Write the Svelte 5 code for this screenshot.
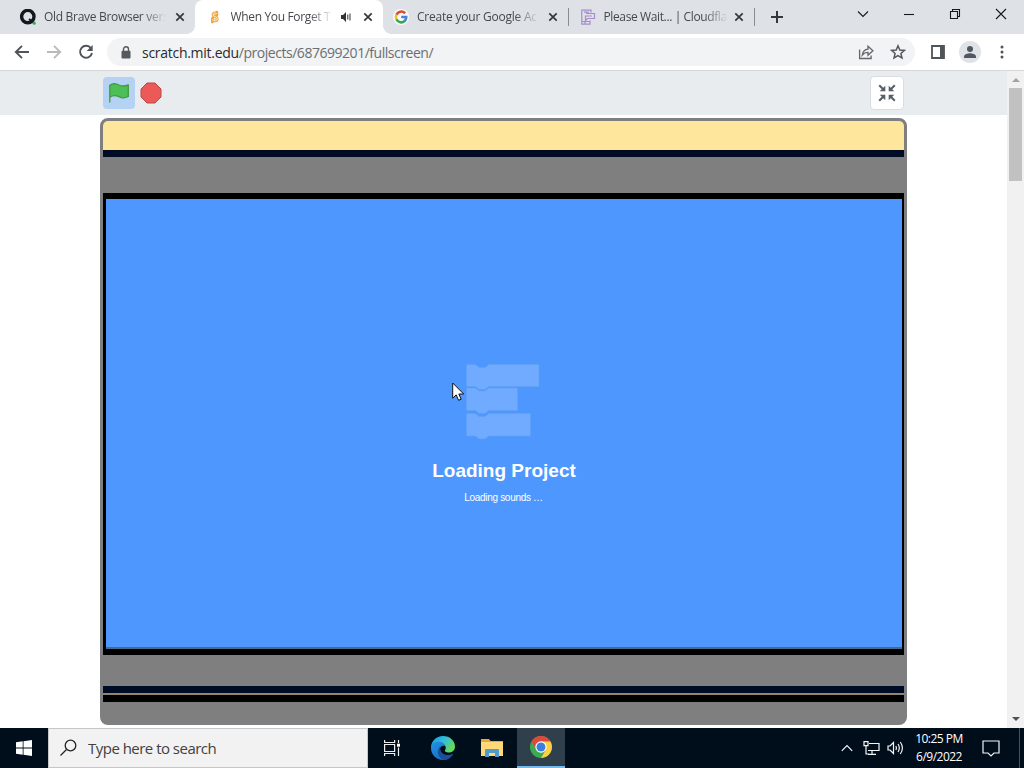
<script>
    const tabs = [
        { title: "Old Brave Browser vers", icon: "brave", width: 122, spacing: -0.3 },
        { title: "When You Forget T", icon: "scratch", width: 102, active: true, audio: true, spacing: -0.34 },
        { title: "Create your Google Ac", icon: "google", width: 122, separator: true, spacing: -0.22 },
        { title: "Please Wait... | Cloudfla", icon: "cloud", width: 124, separator: true, spacing: -0.38 },
    ];

    let search = "";
</script>

<div class="screen">
    <div class="tab-strip">
        {#each tabs as tab}
            <div class="tab" class:active={tab.active} class:separator={tab.separator}>
                <svg class="favicon" width="16" height="16" viewBox="0 0 16 16">
                    {#if tab.icon === "brave"}
                        <circle cx="7.8" cy="7.6" r="6.2" fill="none" stroke="#111820" stroke-width="3.4" />
                        <path d="M9 10l5 4" stroke="#111820" stroke-width="2" />
                        <circle cx="14.2" cy="14.2" r="1.6" fill="#39ad48" />
                    {:else if tab.icon === "scratch"}
                        <path d="M9.8 4.6C7.8 3.2 5.6 4.2 6 6.2C6.4 8 10.2 7.3 10.3 9.8C10.4 12 7 12.6 5.4 11.1M9.8 3.2v3M5.4 9.3v3.7" fill="none" stroke="#f3a43b" stroke-width="2.8" stroke-linecap="round" />
                        <path d="M9.8 4.5C7.8 3.3 5.7 4.4 6 6.1C6.4 7.8 10.4 7.5 10.3 10C10.2 12 7 12.3 5.3 10.8" fill="none" stroke="#fff0c8" stroke-width="1" />
                    {:else if tab.icon === "google"}
                        <circle cx="8" cy="8" r="8" fill="#fafafa" />
                        <g fill="none" stroke-width="2.5">
                            <path d="M12.1 4.4A5.2 5.2 0 0 0 3.4 5.8" stroke="#df4930" />
                            <path d="M3.4 5.6A5.2 5.2 0 0 0 3.6 10.7" stroke="#f5bd20" />
                            <path d="M3.5 10.4A5.2 5.2 0 0 0 11.7 12" stroke="#36a853" />
                            <path d="M8.2 8h5.1A5.2 5.2 0 0 1 11.4 12.2" stroke="#4285d4" />
                        </g>
                    {:else}
                        <g fill="none" stroke="#a78ccd" stroke-width="1.2">
                            <path d="M11 3.5V1.2H1.8v14H10V11.5M1.8 12.5H10M5 12.5v2.5M4 3.2h5" />
                            <path d="M6 4.5h8.5v5H7.5l-2 2V7H12" />
                        </g>
                    {/if}
                </svg>
                <span class="title" style="width: {tab.width}px; letter-spacing: {tab.spacing}px">{tab.title}</span>
                {#if tab.audio}
                    <svg class="audio" width="12" height="12" viewBox="0 0 12 12">
                        <path d="M1 4h2l3-3v10L3 8H1z" fill="#333" />
                        <path d="M7.8 3.5v5M10 2.5v7" stroke="#444" stroke-width="1.1" />
                    </svg>
                {/if}
                <svg class="close" width="10" height="10" viewBox="0 0 10 10">
                    <path d="M1.3 1.3l7.4 7.4M8.7 1.3L1.3 8.7" stroke="#34373b" stroke-width="1.7" />
                </svg>
            </div>
        {/each}
        <svg class="new-tab" width="14" height="14" viewBox="0 0 14 14">
            <path d="M7 1v12M1 7h12" stroke="#34373b" stroke-width="2" />
        </svg>
        <div class="window-buttons">
            <svg width="46" height="28" viewBox="0 0 46 28"><path d="M18 11.5l5 5 5-5" /></svg>
            <svg width="46" height="28" viewBox="0 0 46 28"><path d="M18 14.5h10" /></svg>
            <svg width="46" height="28" viewBox="0 0 46 28"><path d="M18.5 11.5h7v7h-7zM20.5 11.5v-2h7v7h-2" /></svg>
            <svg width="46" height="28" viewBox="0 0 46 28"><path d="M18 9l10 10M28 9L18 19" /></svg>
        </div>
    </div>

    <div class="toolbar">
        <div class="nav">
            <svg width="16" height="16" viewBox="0 0 16 16"><path d="M15 8H2M8 1.8L1.8 8 8 14.2" stroke="#505357" /></svg>
            <svg width="16" height="16" viewBox="0 0 16 16"><path d="M1 8h13M8 1.8L14.2 8 8 14.2" stroke="#b8babc" /></svg>
            <svg width="16" height="16" viewBox="0 0 16 16">
                <path d="M13 4.2A6 6 0 1 0 14 9" stroke="#505357" />
                <path class="solid" d="M14.7 1v6H8.7z" />
            </svg>
        </div>
        <div class="address">
            <svg width="10" height="13" viewBox="0 0 10 13">
                <path d="M2.5 6V3.3a2.5 2.5 0 0 1 5 0V6" fill="none" stroke="#55585c" stroke-width="1.4" />
                <rect x="0.5" y="4.7" width="9" height="7.8" rx="1" fill="#55585c" />
            </svg>
            <span class="url"><b>scratch.mit.edu</b>/projects/687699201/fullscreen/</span>
            <svg width="16" height="16" viewBox="0 0 16 16" fill="none" stroke="#63666a" stroke-width="1.3">
                <path d="M1.6 5.5v9h11.5v-3" />
                <path d="M4.3 11C5 7 7 5.3 10 5.1V2.2l4.9 4.6-4.9 4.4V8.4C7.5 8.3 5.8 9.2 4.3 11z" />
            </svg>
            <svg width="16" height="16" viewBox="0 0 16 16" fill="none" stroke="#55585c" stroke-width="1.5">
                <path d="M8 1.8l1.8 4.2 4.6.4-3.5 3 1.1 4.5L8 11.5l-4 2.4 1.1-4.5-3.5-3L6.2 6z" />
            </svg>
        </div>
        <svg class="panel" width="14" height="14" viewBox="0 0 14 14">
            <path d="M1 1h12v12H1z" fill="#fff" stroke="#505357" stroke-width="1.8" />
            <path d="M9 1h4v12H9z" fill="#505357" />
        </svg>
        <svg class="avatar" width="22" height="22" viewBox="0 0 22 22">
            <circle cx="11" cy="11" r="11" fill="#dfe2e7" />
            <circle cx="11" cy="8" r="3" fill="#505761" />
            <path d="M5 17v-1.5c0-2 4-3.2 6-3.2s6 1.2 6 3.2V17z" fill="#505761" />
        </svg>
        <svg class="more" width="4" height="16" viewBox="0 0 4 16" fill="#505357">
            <circle cx="2" cy="3" r="1.5" /><circle cx="2" cy="8" r="1.5" /><circle cx="2" cy="13" r="1.5" />
        </svg>
    </div>

    <div class="page">
        <div class="content">
            <div class="stage-header">
                <div class="controls">
                    <div class="flag">
                        <svg width="22" height="22" viewBox="0 0 22 22">
                            <path d="M1.8 20V3.2C5 .8 8 1.2 11 3c3 1.6 6 1.2 9.3-.2V14.5c-3.3 1.7-6.3 1.8-9.3.2-3-1.5-6-1.7-9.2.5" fill="#4cbf56" stroke="#45993d" stroke-width="1.3" stroke-linejoin="round" stroke-linecap="round" />
                        </svg>
                    </div>
                    <svg width="22" height="22" viewBox="0 0 22 22">
                        <path d="M7 1h8l6 6v8l-6 6H7l-6-6V7z" fill="#ec5959" stroke="#b84848" stroke-linejoin="round" />
                    </svg>
                </div>
                <div class="unfullscreen">
                    <svg width="18" height="18" viewBox="0 0 18 18">
                        {#each [0, 90, 180, 270] as angle}
                            <g transform="rotate({angle} 9 9)">
                                <path d="M1.2 1.2l4 4" stroke="#575e65" stroke-width="2" />
                                <path d="M7.3 1.7v5.6H1.7z" fill="#575e65" />
                            </g>
                        {/each}
                    </svg>
                </div>
            </div>
            <div class="stage">
                <div class="yellow"></div>
                <div class="navy"></div>
                <div class="grey"></div>
                <div class="frame">
                    <div class="loader">
                        <svg width="74" height="77" viewBox="0 0 74 77">
                            <g fill="#70abff" stroke="#629fee" stroke-width="0.6">
                                <path d="M.5 1Q.5.5 1 .5h7.5c3 0 3 3 5.5 3h4c3 0 3-3 5.5-3H73v22H23.5c-2.5 0-2.5 3-5.5 3h-4c-2.5 0-2.5-3-5.5-3h-8z" />
                                <path d="M.5 24h8c3 0 3 3 5.5 3h4c3 0 3-3 5.5-3h28v22.5h-28c-2.5 0-2.5 3-5.5 3h-4c-2.5 0-2.5-3-5.5-3h-8z" />
                                <path d="M.5 49.5h8c3 0 3 3 5.5 3h4c3 0 3-3 5.5-3h41V72h-41c-2.5 0-2.5 3-5.5 3h-4c-2.5 0-2.5-3-5.5-3h-8z" />
                            </g>
                        </svg>
                        <h1>Loading Project</h1>
                        <p>Loading sounds …</p>
                    </div>
                </div>
                <div class="grey lower"></div>
                <div class="navy"></div>
                <div class="olive"></div>
                <div class="black"></div>
            </div>
        </div>
        <div class="scrollbar">
            <svg width="8" height="4" viewBox="0 0 8 4"><path d="M0 4l4-4 4 4z" fill="#a3a3a3" /></svg>
            <div class="thumb"></div>
            <svg class="down" width="8" height="4" viewBox="0 0 8 4"><path d="M0 0l4 4 4-4z" fill="#505050" /></svg>
        </div>
    </div>

    <div class="taskbar">
        <div class="start">
            <svg width="16" height="16" viewBox="0 0 16 16" fill="#fff">
                <path d="M0 2.2L6.7 1.3v6.2H0zM7.5 1.2L16 0v7.5H7.5zM0 8.4h6.7v6.3L0 13.8zM7.5 8.4H16V16l-8.5-1.2z" />
            </svg>
        </div>
        <div class="search">
            <svg width="18" height="18" viewBox="0 0 18 18" fill="none" stroke="#222" stroke-width="1.3">
                <circle cx="10.5" cy="6.5" r="5.3" /><path d="M6.5 10.5L.5 16.5" />
            </svg>
            <input type="text" placeholder="Type here to search" bind:value={search} />
        </div>
        <div class="app">
            <svg width="18" height="18" viewBox="0 0 18 18" fill="none" stroke="#eee" stroke-width="1.2">
                <path d="M1.6 1v2.5h10V1M1.6 17v-2.5h10V17M1.6 5.5h10v7h-10zM15.5 1v3M15.5 8.5V17" />
                <path d="M14 4.7h3v3h-3z" fill="#fff" stroke="none" />
            </svg>
        </div>
        <div class="app edge">
            <svg width="24" height="24" viewBox="0 0 24 24">
                <defs>
                    <linearGradient id="edgeTop" x1="0" y1="0" x2="1" y2="0.5">
                        <stop offset="0" stop-color="#1495d9" /><stop offset="0.5" stop-color="#30bce0" /><stop offset="1" stop-color="#65d95b" />
                    </linearGradient>
                    <linearGradient id="edgeBase" x1="0" y1="0" x2="1" y2="1">
                        <stop offset="0" stop-color="#2392e8" /><stop offset="1" stop-color="#1261ae" />
                    </linearGradient>
                </defs>
                <path d="M0 12C0 5 5 0 12 0s12 5 12 10.5c0 4-3 6-6.5 6-2.6 0-4.2-1-3.5-2.2 2.3-3.5-.7-6.3-4.5-6.3C5 8 1 9 0 12z" fill="url(#edgeTop)" />
                <path d="M0 12c0-3.4 3-6.2 7.3-6.2 3.8 0 6.8 2 7.3 4.5C10 8.5 8.2 12 9.5 15.2c1.6 4 8 5.4 12.7 2.5C20 21.6 16.5 24 12 24 5.3 24 0 18.7 0 12z" fill="url(#edgeBase)" />
                <path d="M9.1 10.5C5 15 7 22 13 24c4 0 7.4-2.7 9.2-6.3C16 21 8.5 18.5 9.1 10.5z" fill="#184f98" />
            </svg>
        </div>
        <div class="app folder">
            <svg width="22" height="18" viewBox="0 0 22 18">
                <path d="M0 0h8l1.5 2H22v15H0z" fill="#e5aa38" />
                <path d="M0 3h22v14H0z" fill="#ffd978" />
                <path d="M4 18v-7q0-1 1-1h12q1 0 1 1v7h-4v-4H8v4z" fill="#4e9bcc" />
            </svg>
        </div>
        <div class="app current">
            <svg width="22" height="22" viewBox="0 0 22 22">
                <circle cx="11" cy="11" r="11" fill="#3bac4e" />
                <path d="M1.5 5.5A11 11 0 0 1 20.5 5.5H11L6.2 13.7z" fill="#df493c" />
                <path d="M20.5 5.5A11 11 0 0 1 11 22l4.8-8.2L11 5.5z" fill="#fbd044" />
                <circle cx="11" cy="11" r="5.7" fill="#fff" /><circle cx="11" cy="11" r="4.5" fill="#3d7de0" />
            </svg>
        </div>
        <div class="tray">
            <svg width="12" height="8" viewBox="0 0 12 8"><path d="M.8 6.8L6 1.5l5.2 5.3" /></svg>
            <svg class="network" width="17" height="14" viewBox="0 0 17 14">
                <path d="M6 2.5h10v7H5M5 13.3h8M9 9.5v4M1 .7h4v4H1zM3 5v8h3" />
            </svg>
            <svg class="volume" width="17" height="14" viewBox="0 0 17 14">
                <path d="M1 5h2l3.5-3.5v11L3 9H1zM8.8 5Q10 7 8.8 9M11 3Q13.6 7 11 11M13.3 1Q17.5 7 13.3 13" />
            </svg>
            <div class="clock"><span>10:25 PM</span><span>6/9/2022</span></div>
            <svg class="notice" width="18" height="17" viewBox="0 0 18 17">
                <path d="M1 1h16v12h-5l-3 3-3-3H1z" />
            </svg>
            <div class="show-desktop"></div>
        </div>
    </div>

    <svg class="cursor" width="13" height="20" viewBox="0 0 13 20">
        <path d="M.7 1v15.2l3.5-3.3 2.4 5.4 2.6-1.1-2.4-5.2h4.9z" fill="#fff" stroke="#111" />
    </svg>
</div>

<style>
    :global(body) {
        margin: 0;
    }
    .screen {
        position: relative;
        display: flex;
        flex-direction: column;
        width: 1024px;
        height: 768px;
        overflow: hidden;
        background: #fff;
        font-family: "Open Sans", "Noto Sans", sans-serif;
    }
    svg {
        display: block;
        flex: none;
    }

    /* Tabs */
    .tab-strip {
        display: flex;
        height: 34px;
        padding-left: 8px;
        background: #dee1e6;
        flex: none;
    }
    .tab {
        position: relative;
        display: flex;
        align-items: center;
        box-sizing: border-box;
        width: 186.5px;
        height: 34px;
        padding: 0 10px 0 12px;
        flex: none;
    }
    .tab.active {
        width: 188px;
        margin-right: -1.5px;
        background: #fff;
        border-radius: 8px 8px 0 0;
    }
    .tab.active::before,
    .tab.active::after {
        content: "";
        position: absolute;
        bottom: 0;
        width: 8px;
        height: 8px;
    }
    .tab.active::before {
        left: -8px;
        background: radial-gradient(circle at 0 0, transparent 7.5px, #fff 8px);
    }
    .tab.active::after {
        right: -8px;
        background: radial-gradient(circle at 100% 0, transparent 7.5px, #fff 8px);
    }
    .tab.separator::after {
        content: "";
        position: absolute;
        right: -1px;
        top: 8px;
        width: 1px;
        height: 18px;
        background: #898c91;
    }
    .title {
        margin-left: 8px;
        white-space: nowrap;
        font-size: 12px;
        line-height: 18px;
        color: #45484d;
        mask-image: linear-gradient(to right, #000 calc(100% - 24px), transparent);
    }
    .audio {
        margin-left: 7px;
    }
    .close {
        margin-left: auto;
    }
    .new-tab {
        margin: 10px 0 0 16px;
    }
    .window-buttons {
        display: flex;
        margin-left: auto;
    }
    .window-buttons path {
        fill: none;
        stroke: #17191b;
        stroke-width: 1.1;
    }

    /* Toolbar */
    .toolbar {
        display: flex;
        align-items: center;
        box-sizing: border-box;
        height: 37px;
        border-bottom: 1px solid #d5d7da;
        background: #fff;
        flex: none;
    }
    .nav {
        display: flex;
        gap: 16px;
        margin-left: 14px;
    }
    .nav path {
        fill: none;
        stroke-width: 1.9;
    }
    .nav .solid {
        fill: #505357;
    }
    .address {
        display: flex;
        align-items: center;
        box-sizing: border-box;
        width: 808px;
        height: 28px;
        margin-left: 13px;
        padding: 0 9px 0 14px;
        border-radius: 14px;
        background: #f1f3f4;
        gap: 16px;
    }
    .url {
        flex: 1;
        margin-left: -5px;
        font-size: 14px;
        letter-spacing: -0.47px;
        white-space: nowrap;
        color: #6b6e72;
    }
    .url b {
        font-weight: normal;
        letter-spacing: -0.28px;
        color: #292b2e;
    }
    .panel {
        margin-left: 16px;
    }
    .avatar {
        margin-left: 14px;
    }
    .more {
        margin-left: 19px;
    }

    /* Page */
    .page {
        display: flex;
        height: 657px;
        flex: none;
    }
    .content {
        width: 1007px;
    }
    .stage-header {
        display: flex;
        justify-content: space-between;
        box-sizing: border-box;
        height: 44px;
        padding: 5px 103px 0;
        background: #e8ecef;
    }
    .controls {
        display: flex;
        align-items: center;
        gap: 5px;
        height: 34px;
    }
    .flag {
        display: flex;
        align-items: center;
        justify-content: center;
        width: 32px;
        height: 32px;
        border-radius: 4px;
        background: #b3d2f4;
    }
    .unfullscreen {
        display: flex;
        align-items: center;
        justify-content: center;
        box-sizing: border-box;
        width: 34px;
        height: 34px;
        border: 1px solid #d9dde2;
        border-radius: 4px;
        background: #fff;
    }
    .stage {
        box-sizing: border-box;
        width: 807px;
        height: 607px;
        margin: 3px 0 0 100px;
        border: 3px solid #7d7f80;
        border-radius: 8px;
        overflow: hidden;
        background: #7f7f7f;
    }
    .yellow {
        height: 29px;
        background: #ffe69d;
    }
    .navy {
        height: 7px;
        background: #000c26;
    }
    .grey {
        height: 36px;
    }
    .grey.lower {
        height: 31px;
    }
    .olive {
        height: 2px;
        background: #958766;
    }
    .black {
        height: 7px;
        background: #000;
    }
    .frame {
        box-sizing: border-box;
        height: 462px;
        padding: 6px 2px 6px 3px;
        background: #000;
    }
    .loader {
        display: flex;
        flex-direction: column;
        align-items: center;
        box-sizing: border-box;
        height: 450px;
        padding-top: 165px;
        border-bottom: 2px solid #49698f;
        background: #4d97ff;
        color: #fff;
        font-family: "Liberation Sans", Arial, sans-serif;
    }
    .loader svg {
        margin-right: 2px;
    }
    .loader h1 {
        margin: 18px 0 0;
        font-size: 19px;
        line-height: 24px;
    }
    .loader p {
        margin: 9px 1px 0 0;
        font-size: 10px;
        line-height: 12px;
        letter-spacing: -0.3px;
    }
    .scrollbar {
        display: flex;
        flex-direction: column;
        align-items: center;
        box-sizing: border-box;
        width: 17px;
        padding: 7px 0 7px;
        background: #f1f1f1;
    }
    .thumb {
        width: 13px;
        height: 93px;
        margin-top: 6px;
        background: #c1c1c1;
    }
    .down {
        margin-top: auto;
    }

    /* Taskbar */
    .taskbar {
        display: flex;
        height: 40px;
        background: #000d1b;
        flex: none;
    }
    .start,
    .app {
        display: flex;
        align-items: center;
        justify-content: center;
        box-sizing: border-box;
        width: 48px;
        height: 40px;
    }
    .app {
        width: 47px;
    }
    .app.edge {
        width: 55px;
    }
    .app.folder {
        padding-right: 4px;
    }
    .app.current {
        width: 48px;
        border-bottom: 2px solid #76b9ed;
        background: #303f4c;
    }
    .search {
        display: flex;
        align-items: center;
        box-sizing: border-box;
        width: 320px;
        padding-left: 11px;
        border: 1px solid #c4c6c8;
        background: #f2f2f2;
    }
    .search input {
        width: 240px;
        margin-left: 10px;
        padding: 0;
        border: 0;
        background: none;
        font: 15px "Open Sans", sans-serif;
        letter-spacing: -0.52px;
    }
    .search input::placeholder {
        color: #414141;
        opacity: 1;
    }
    .tray {
        display: flex;
        align-items: center;
        margin-left: auto;
    }
    .tray path {
        fill: none;
        stroke: #f4f6f8;
        stroke-width: 1.2;
    }
    .network {
        margin-left: 10px;
    }
    .volume {
        margin-left: 7px;
    }
    .clock {
        display: flex;
        flex-direction: column;
        align-items: center;
        width: 54px;
        margin-left: 8px;
        font-size: 12px;
        line-height: 18px;
        letter-spacing: -0.5px;
        white-space: nowrap;
        color: #fff;
    }
    .notice {
        margin-left: 16px;
    }
    .show-desktop {
        width: 4px;
        height: 40px;
        margin-left: 19px;
        border-left: 1px solid #45505b;
    }
    .cursor {
        position: absolute;
        left: 452px;
        top: 382px;
    }
</style>
